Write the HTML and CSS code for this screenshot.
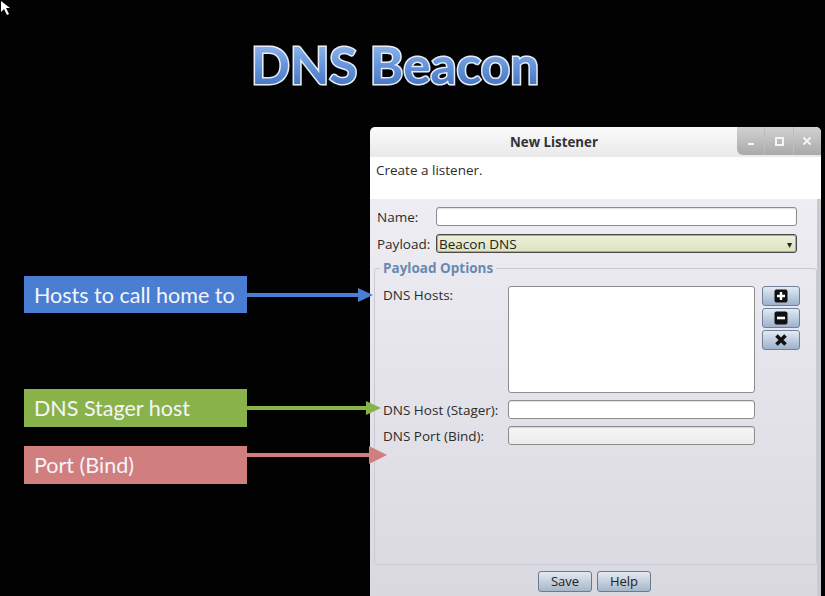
FILE: index.html
```html
<!DOCTYPE html>
<html>
<head>
<meta charset="utf-8">
<link rel="stylesheet" href="styles.css">
</head>
<body>
<div class="stage">
  <svg class="cursor" width="12" height="16" viewBox="0 0 12 16"><path d="M1 1 L1 12 L4 9 L7 15 L9 14 L6 8 L10 8 Z" fill="#fff"/></svg>
  <svg class="title" width="825" height="127" viewBox="0 0 825 127">
    <defs>
      <linearGradient id="tg" x1="0" y1="0" x2="0" y2="1">
        <stop offset="0" stop-color="#a3c4ef"/>
        <stop offset="0.5" stop-color="#6796dc"/>
        <stop offset="1" stop-color="#3a69b8"/>
      </linearGradient>
    </defs>
    <text x="395" y="84" text-anchor="middle" textLength="288" lengthAdjust="spacingAndGlyphs" class="title-text" fill="url(#tg)" stroke="#e6edf8" stroke-width="3" paint-order="stroke">DNS Beacon</text>
  </svg>
  <div class="row">
    <div class="callouts">
      <div class="callout blue">
        <div class="box">Hosts to call home to</div>
        <svg class="arrow" width="126" height="16" viewBox="0 0 126 16"><rect x="0" y="6" width="112" height="4"/><polygon points="111,1 126,8 111,15"/></svg>
      </div>
      <div class="callout green">
        <div class="box">DNS Stager host</div>
        <svg class="arrow" width="134" height="16" viewBox="0 0 134 16"><rect x="0" y="6" width="120" height="4"/><polygon points="119,1 134,8 119,15"/></svg>
      </div>
      <div class="callout red">
        <div class="box">Port (Bind)</div>
        <svg class="arrow top" width="140" height="18" viewBox="0 0 140 18"><rect x="0" y="7" width="123" height="4"/><polygon points="122,0 140,9 122,18"/></svg>
      </div>
    </div>
    <div class="window">
      <div class="titlebar">
        <span class="wtitle">New Listener</span>
        <div class="controls">
          <span class="ctl"><svg width="10" height="10" viewBox="0 0 10 10"><rect x="2" y="7" width="6" height="2" fill="#f4f4f4"/></svg></span>
          <span class="ctl"><svg width="10" height="10" viewBox="0 0 10 10"><rect x="2" y="2" width="7" height="7" fill="none" stroke="#f4f4f4" stroke-width="2"/></svg></span>
          <span class="ctl"><svg width="10" height="10" viewBox="0 0 10 10"><path d="M1.5 1.5 L8.5 8.5 M8.5 1.5 L1.5 8.5" stroke="#f4f4f4" stroke-width="2"/></svg></span>
        </div>
      </div>
      <div class="header">Create a listener.</div>
      <div class="body">
        <div class="frow">
          <label class="flabel">Name:</label>
          <div class="input wide"></div>
        </div>
        <div class="frow">
          <label class="flabel">Payload:</label>
          <div class="combo wide"><span>Beacon DNS</span><span class="caret">▾</span></div>
        </div>
        <fieldset class="group">
          <legend>Payload Options</legend>
          <div class="grid">
            <label class="glabel">DNS Hosts:</label>
            <div class="hosts">
              <div class="list"></div>
              <div class="sidebtns">
                <div class="sbtn"><svg width="14" height="14" viewBox="0 0 14 14"><rect x="0.5" y="0.5" width="13" height="13" rx="2" fill="#111"/><path d="M7 3 V11 M3 7 H11" stroke="#fff" stroke-width="2.4"/></svg></div>
                <div class="sbtn"><svg width="14" height="14" viewBox="0 0 14 14"><rect x="0.5" y="0.5" width="13" height="13" rx="2" fill="#111"/><path d="M3 7 H11" stroke="#fff" stroke-width="2.6"/></svg></div>
                <div class="sbtn"><svg width="14" height="14" viewBox="0 0 14 14"><path d="M2.5 2.5 L11.5 11.5 M11.5 2.5 L2.5 11.5" stroke="#111" stroke-width="3.6"/></svg></div>
              </div>
            </div>
            <label class="glabel">DNS Host (Stager):</label>
            <div class="input field"></div>
            <label class="glabel">DNS Port (Bind):</label>
            <div class="input field dim"></div>
          </div>
        </fieldset>
        <div class="footer">
          <button class="btn">Save</button>
          <button class="btn">Help</button>
        </div>
      </div>
    </div>
  </div>
</div>
</body>
</html>
```

FILE: styles.css
```css
html, body {
  margin: 0;
  padding: 0;
  background: #000;
  overflow: hidden;
}
.stage {
  width: 825px;
  height: 596px;
  position: relative;
  overflow: hidden;
  background: #020202;
}
.cursor {
  position: absolute;
  left: 0;
  top: 0;
}
.title {
  display: block;
}
.title-text {
  font-family: Lato, "Open Sans", sans-serif;
  font-weight: 700;
  font-size: 51px;
}
.row {
  display: flex;
  align-items: flex-start;
}
.callouts {
  width: 370px;
  flex: none;
  position: relative;
  z-index: 2;
  padding-top: 149px;
  display: flex;
  flex-direction: column;
}
.callout {
  display: flex;
  align-items: center;
  height: 37px;
  margin-left: 24px;
}
.callout.green { margin-top: 76px; height: 38px; }
.callout.red { margin-top: 19px; height: 38px; }
.box {
  width: 223px;
  height: 100%;
  flex: none;
  box-sizing: border-box;
  padding-left: 10px;
  display: flex;
  align-items: center;
  color: #f4f6fa;
  font-family: Lato, "Open Sans", sans-serif;
  font-size: 21.5px;
}
.arrow { flex: none; display: block; }
.arrow.top { align-self: flex-start; }
.blue .box { background: #4a7ed2; }
.blue .arrow { fill: #4a7ed2; }
.green .box { background: #8ab24a; }
.green .arrow { fill: #8ab24a; }
.red .box { background: #d07e7e; }
.red .arrow { fill: #d07e7e; }

.window {
  width: 451px;
  flex: none;
  height: 480px;
  display: flex;
  flex-direction: column;
  border-radius: 5px 5px 0 0;
  overflow: hidden;
  font-family: "Open Sans", "DejaVu Sans", sans-serif;
  font-size: 13.5px;
  color: #2c2c2c;
}
.titlebar {
  height: 30px;
  flex: none;
  display: flex;
  align-items: flex-start;
  background: linear-gradient(#fbfbfb, #e9e9e9);
}
.wtitle {
  flex: 1;
  text-align: center;
  font-weight: 700;
  font-size: 13.3px;
  line-height: 31px;
  color: #333;
  padding-left: 1px;
}
.controls {
  flex: none;
  height: 28px;
  width: 84px;
  display: flex;
  background: linear-gradient(#d2d2d2, #a9a9a9);
  border-radius: 0 5px 0 6px;
}
.ctl {
  flex: 1;
  display: flex;
  align-items: center;
  justify-content: center;
  border-left: 1px solid #bdbdbd;
}
.ctl:first-child { border-left: none; }
.header {
  height: 42px;
  flex: none;
  box-sizing: border-box;
  background: #fff;
  padding: 4px 6px;
}
.body {
  flex: 1;
  display: flex;
  flex-direction: column;
  background: linear-gradient(#ededf3, #d8d8de);
  border-right: 4px solid #c9c9d0;
  padding: 8px 0 0 0;
}
.frow {
  display: flex;
  align-items: center;
  padding-left: 7px;
  margin-bottom: 8px;
}
.flabel {
  width: 59px;
  flex: none;
}
.input {
  height: 19px;
  box-sizing: border-box;
  background: #fff;
  border: 1px solid #8c8c8c;
  border-radius: 3px;
  box-shadow: inset 0 1px 1px rgba(0,0,0,0.12);
}
.wide { width: 361px; }
.combo {
  height: 19px;
  box-sizing: border-box;
  border: 1px solid #4a4a4a;
  border-radius: 3px;
  background: linear-gradient(#eef0da, #dde3bf);
  display: flex;
  align-items: center;
  justify-content: space-between;
  padding: 0 4px 0 2px;
  color: #222;
  box-shadow: inset 0 0 0 1px #a9ae90;
}
.caret { font-size: 10px; color: #222; }
.group {
  margin: -1px 0 0 4px;
  width: 443px;
  box-sizing: border-box;
  height: 305px;
  border: 1px solid #c6cad4;
  border-radius: 3px;
  padding: 10px 0 0 8px;
}
.group legend {
  font-weight: 700;
  font-size: 13.5px;
  color: #6a88b0;
  padding: 0 3px;
  margin-left: -3px;
  line-height: 16px;
}
.grid {
  display: grid;
  grid-template-columns: 125px auto;
  row-gap: 7px;
  align-items: center;
}
.glabel { align-self: center; }
.grid .glabel:first-child { align-self: start; padding-top: 0; }
.hosts {
  display: flex;
  gap: 7px;
}
.list {
  width: 247px;
  height: 107px;
  box-sizing: border-box;
  background: #fff;
  border: 1px solid #8c8c8c;
  border-radius: 3px;
}
.sidebtns {
  display: flex;
  flex-direction: column;
  gap: 2px;
}
.sbtn {
  width: 38px;
  height: 20px;
  box-sizing: border-box;
  border: 1px solid #6f819a;
  border-radius: 3px;
  background: linear-gradient(#e2eaf4, #9db2cc);
  display: flex;
  align-items: center;
  justify-content: center;
}
.field { width: 247px; }
.dim { background: linear-gradient(#f6f6f6, #ececec); }
.footer {
  display: flex;
  justify-content: center;
  gap: 5px;
  padding-top: 6px;
  margin-left: 2px;
}
.btn {
  height: 21px;
  width: 54px;
  box-sizing: border-box;
  font-family: "Open Sans", "DejaVu Sans", sans-serif;
  font-size: 13px;
  line-height: 19px;
  color: #222;
  border: 1px solid #6a7a90;
  border-radius: 3px;
  background: linear-gradient(#e4e9f1, #a7b6c9);
  padding: 0;
}
```
